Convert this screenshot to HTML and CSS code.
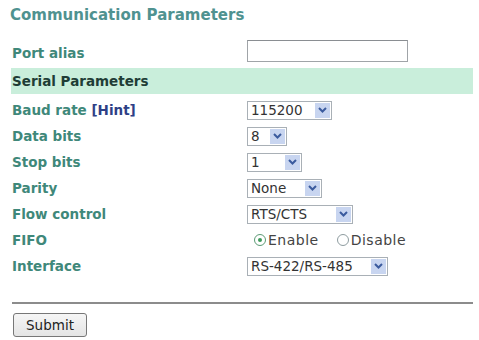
FILE: index.html
```html
<!DOCTYPE html>
<html lang="en">
<head>
  <meta charset="UTF-8">
  <title>Communication Parameters</title>
  <link rel="stylesheet" href="styles.css">
</head>
<body>
  <div class="page">
    <h1 class="title">Communication Parameters</h1>

    <div class="row port-row">
      <label>Port alias</label>
      <input type="text" class="text-input">
    </div>

    <div class="band">Serial Parameters</div>

    <div class="row">
      <label>Baud rate <span class="hint">[Hint]</span></label>
      <div class="select w-baud"><span class="value">115200</span><span class="arrow"><svg width="9" height="6" viewBox="0 0 9 6"><path d="M1 1 L4.5 4.5 L8 1" fill="none" stroke="#3b5b9e" stroke-width="2"/></svg></span></div>
    </div>
    <div class="row">
      <label>Data bits</label>
      <div class="select w-data"><span class="value">8</span><span class="arrow"><svg width="9" height="6" viewBox="0 0 9 6"><path d="M1 1 L4.5 4.5 L8 1" fill="none" stroke="#3b5b9e" stroke-width="2"/></svg></span></div>
    </div>
    <div class="row">
      <label>Stop bits</label>
      <div class="select w-stop"><span class="value">1</span><span class="arrow"><svg width="9" height="6" viewBox="0 0 9 6"><path d="M1 1 L4.5 4.5 L8 1" fill="none" stroke="#3b5b9e" stroke-width="2"/></svg></span></div>
    </div>
    <div class="row">
      <label>Parity</label>
      <div class="select w-parity"><span class="value">None</span><span class="arrow"><svg width="9" height="6" viewBox="0 0 9 6"><path d="M1 1 L4.5 4.5 L8 1" fill="none" stroke="#3b5b9e" stroke-width="2"/></svg></span></div>
    </div>
    <div class="row">
      <label>Flow control</label>
      <div class="select w-flow"><span class="value">RTS/CTS</span><span class="arrow"><svg width="9" height="6" viewBox="0 0 9 6"><path d="M1 1 L4.5 4.5 L8 1" fill="none" stroke="#3b5b9e" stroke-width="2"/></svg></span></div>
    </div>
    <div class="row">
      <label>FIFO</label>
      <div class="radios">
        <span class="radio checked"></span><span class="radio-text">Enable</span>
        <span class="radio"></span><span class="radio-text">Disable</span>
      </div>
    </div>
    <div class="row">
      <label>Interface</label>
      <div class="select w-iface"><span class="value">RS-422/RS-485</span><span class="arrow"><svg width="9" height="6" viewBox="0 0 9 6"><path d="M1 1 L4.5 4.5 L8 1" fill="none" stroke="#3b5b9e" stroke-width="2"/></svg></span></div>
    </div>

    <hr class="divider">
    <button class="submit-btn">Submit</button>
  </div>
</body>
</html>
```

FILE: styles.css
```css
body {
  margin: 0;
  padding: 0;
  background-color: #fff;
  font-family: "DejaVu Sans", Verdana, sans-serif;
}
.page {
  padding: 6px 6px 0 11px;
}
.title {
  margin: 0 0 13px -1px;
  font-size: 15px;
  line-height: 18px;
  font-weight: bold;
  color: #4f9290;
}
.row {
  display: grid;
  grid-template-columns: 236px 1fr;
  align-items: center;
  height: 26px;
}
.row label {
  padding-left: 1px;
  font-size: 13.5px;
  font-weight: bold;
  color: #3f887a;
}
.hint {
  color: #2e3f86;
}
.port-row {
  height: 28px;
  margin-bottom: 3px;
}
.port-row label {
  padding-top: 4px;
}
.text-input {
  width: 161px;
  height: 22px;
  box-sizing: border-box;
  border: 1px solid #a0a4a8;
  border-top-color: #8a8e92;
  margin: 0;
  padding: 0;
}
.band {
  height: 26px;
  line-height: 27px;
  padding-left: 1px;
  margin-bottom: 3px;
  background-color: #c9eedb;
  font-size: 13.5px;
  font-weight: bold;
  color: #1f3d36;
}
.select {
  display: flex;
  align-items: center;
  justify-content: space-between;
  box-sizing: border-box;
  height: 19px;
  border: 1px solid #a9b0b6;
  background-color: #fff;
  padding: 0 1px 0 3px;
}
.select .value {
  font-size: 13.5px;
  color: #333;
}
.select .arrow {
  display: flex;
  align-items: center;
  justify-content: center;
  width: 15px;
  height: 15px;
  background-color: #c8d5f0;
}
.w-baud { width: 85px; }
.w-data { width: 40px; }
.w-stop { width: 55px; }
.w-parity { width: 75px; }
.w-flow { width: 106px; }
.w-iface { width: 141px; }
.radios {
  display: flex;
  align-items: center;
  padding-left: 7px;
}
.radio {
  width: 10px;
  height: 10px;
  border: 1px solid #8e9ca0;
  border-radius: 50%;
  position: relative;
  margin-right: 2px;
}
.radio.checked {
  border-color: #5b9a74;
}
.radio.checked::after {
  content: "";
  position: absolute;
  left: 3px;
  top: 3px;
  width: 4px;
  height: 4px;
  border-radius: 50%;
  background-color: #3e9a5c;
}
.radio-text {
  font-size: 14px;
  letter-spacing: 0.5px;
  color: #444;
  margin-right: 18px;
}
.divider {
  margin: 23px 0 9px 1px;
  border: none;
  height: 2px;
  background-color: #8c8c8c;
}
.submit-btn {
  margin-left: 2px;
  width: 74px;
  height: 24px;
  border: 1px solid #777;
  border-radius: 3px;
  background: linear-gradient(#f6f6f6, #e4e4e4);
  font-family: "DejaVu Sans", Verdana, sans-serif;
  font-size: 13.5px;
  color: #222;
}
```
